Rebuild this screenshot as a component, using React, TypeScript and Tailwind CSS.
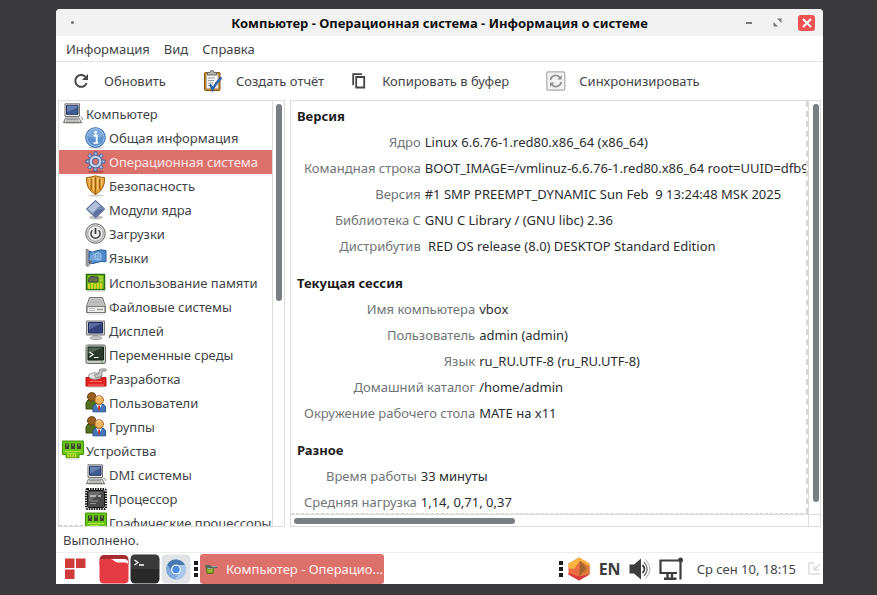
import type { ReactNode } from "react";

type IconProps = { children: ReactNode; size?: string; box?: string };

function Svg({ children, size = "size-[22px]", box = "0 0 22 22" }: IconProps) {
  return (
    <svg viewBox={box} className={`${size} shrink-0`} fill="none" aria-hidden="true">
      {children}
    </svg>
  );
}

const ComputerIcon = () => (
  <Svg>
    <ellipse cx="11" cy="19.800" rx="10.500" ry="1.500" fill="#d2d2cf" />
    <path d="M3 .8h14.500v12.700H3z" fill="#e8e8e4" stroke="#777" />
    <path d="M4.500 2.300h11.500v9H4.500z" fill="#3f5c92" stroke="#26375f" />
    <path d="M5 2.800h10.500v1.500L5 9.300z" fill="#7790bd" opacity=".7" />
    <path d="M3.500 15h13.500l2.500 4.500h-18z" fill="#e0e0dc" stroke="#777" />
    <path d="M4.500 16.500h11.500M3.800 18.100h13" stroke="#999" />
    <path d="M18.500 14q2.500.5 2 3" stroke="#999" />
  </Svg>
);

const InfoIcon = () => (
  <Svg>
    <ellipse cx="11" cy="20.600" rx="8" ry="1.200" fill="#d2d2d2" />
    <circle cx="10.500" cy="10.500" r="9.800" fill="#5b92cf" stroke="#2c67ae" />
    <circle cx="10.500" cy="10.500" r="8.700" stroke="#a3c4e8" />
    <path d="M2.500 9a8 8 0 0 1 16 0q-8 4-16 0z" fill="#a0c2e8" opacity=".5" />
    <circle cx="10.600" cy="5.500" r="1.400" fill="#fff" />
    <path d="M8.700 8.500h3v7M8.500 15.800h4.800" stroke="#fff" strokeWidth="1.800" />
  </Svg>
);

const teeth = [0, 45, 90, 135, 180, 225, 270, 315];

const GearIcon = () => (
  <Svg>
    <ellipse cx="11" cy="20.800" rx="8" ry="1" fill="#a74d49" />
    {teeth.map((angle) => (
      <path
        key={angle}
        d="M8.700 5 9.200.9h2.700l.5 4.100z"
        transform={`rotate(${angle} 10.500 10.500)`}
        fill="#a9b9df"
        stroke="#44598e"
        strokeWidth=".9"
      />
    ))}
    <circle cx="10.500" cy="10.500" r="6.500" fill="#9eb0da" stroke="#44598e" strokeWidth=".8" />
    <circle cx="10.500" cy="10.500" r="4.700" stroke="#d0daf0" strokeWidth="1.500" />
    <circle cx="10.500" cy="10.500" r="3" fill="#dc716c" stroke="#4c5f93" />
  </Svg>
);

const ShieldIcon = () => (
  <Svg>
    <ellipse cx="11" cy="20.500" rx="8" ry="1.200" fill="#d8d4cc" />
    <path d="M1.500 2.500Q6 2.500 10.500.8 15 2.500 19.500 2.500q1 11.500-9 17-10-5.500-9-17z" fill="#e9a03a" stroke="#99600b" />
    <path d="M3 4q4 0 7.500-1.600Q14 4 18 4" stroke="#ffd184" />
    <path d="M6.200 3.500v11M10.500 2v17M14.800 3.500v11" stroke="#9d610c" strokeWidth="1.300" />
    <path d="M4.700 5v6M8.500 4v11M12.700 4v11M16.700 5v6" stroke="#ffd07c" />
  </Svg>
);

const ModuleIcon = () => (
  <Svg>
    <ellipse cx="11" cy="18.500" rx="7" ry="2" fill="#c4c4c4" />
    <path d="m10.500 1.500 9.200 8.500-9 8.800L1.500 10z" fill="#7b8fba" stroke="#42537e" />
    <path d="m10.500 2.500-7.800 7.500 4.600 4L15 6.500z" fill="#b3c1dd" />
    <path d="m12 11-3.500 4 2.200 2.700L18.500 10z" fill="#5a6f9f" />
  </Svg>
);

const PowerIcon = () => (
  <Svg>
    <circle cx="10.500" cy="10.500" r="9.800" fill="#d8d8d6" stroke="#686868" />
    <circle cx="10.500" cy="10.500" r="7.800" fill="#eee" stroke="#999" />
    <path d="M7.400 7.200a4.600 4.600 0 1 0 6.200 0" stroke="#444" strokeWidth="1.500" />
    <path d="M10.500 5v6" stroke="#333" strokeWidth="1.700" />
  </Svg>
);

const FlagIcon = () => (
  <Svg>
    <path d="M1.200 2.500h2v17l-2-1z" fill="#aaa" stroke="#6e6e6e" strokeWidth=".8" />
    <path d="M4 4q3 2 7 0t10-.5v11.300q-5-1-9 .7t-8 .5z" fill="#4f8bcb" stroke="#2c5d98" />
    <path d="m4 13 4-9 3 5-4 7z" fill="#8ab3df" opacity=".6" />
    <circle cx="13" cy="9" r="3.200" stroke="#b8d5f2" />
    <path d="M10 9h6M13 6v6M9 12q4 3 8 0" stroke="#b8d5f2" strokeWidth=".7" />
    <path d="m4 13 3 1-2.500 5z" fill="#666" />
  </Svg>
);

const MemoryIcon = () => (
  <Svg>
    <path d="M1.500 2.500h18v15h-18z" fill="#7dc51a" stroke="#286b10" strokeWidth="1.500" />
    <path d="M4 6q2-2 4-1.500T13 5v5H3.500z" fill="#666e56" stroke="#414936" />
    <path d="M13.500 5h4M14 8h4" stroke="#c7dd4e" />
    <path d="M4 12v5M7 11v6M10 12v5M13 11v6M16 11v6" stroke="#f0d928" strokeWidth="1.500" />
    <path d="M2 19.500h18" stroke="#ddd" />
  </Svg>
);

const DriveIcon = () => (
  <Svg>
    <path d="M4.500 1.500h13l3 9v6h-19v-6z" fill="#d0d0cf" stroke="#777" />
    <path d="M5 2.500h12l2.500 8h-17z" fill="#bdbdbd" />
    <path d="M2 10.500h18v6H2z" fill="#eeeeec" stroke="#777" />
    <path d="M4 12.500h6M4 14.500h6" stroke="#bbb" />
    <path d="M12 13.500h6" stroke="#999" strokeWidth="1.500" />
    <path d="M2 18h18" stroke="#d7d7d7" />
  </Svg>
);

const DisplayIcon = () => (
  <Svg>
    <ellipse cx="11" cy="18" rx="6" ry="1.500" fill="#d7d7d7" stroke="#929292" />
    <path d="M8 15h5v3H8z" fill="#b9b9b9" />
    <path d="M1.500 1h18v14h-18z" fill="#cbd0cc" stroke="#777b78" />
    <path d="M3.500 2.500h14V13h-14z" fill="#34417c" stroke="#242d5b" />
    <path d="M4 3h13L4 9.500z" fill="#6979af" opacity=".7" />
  </Svg>
);

const TerminalIcon = () => (
  <Svg>
    <rect x="1" y="1" width="19.500" height="18.500" rx="1.500" fill="#c9ccc6" stroke="#676a64" />
    <path d="M3 3h15.500v13H3z" fill="#293a2c" stroke="#142016" />
    <path d="M3.500 3.500h14.500L3.500 10z" fill="#637365" opacity=".7" />
    <path d="m4.500 8 3.500 2.500-3.500 2.500M9 13.500h4.500" stroke="#fff" strokeWidth="1.200" />
    <path d="M16 18h2" stroke="#5aa724" />
  </Svg>
);

const DevIcon = () => (
  <Svg>
    <path d="M1 9.500h3.500l1 1.500h10l1-1.500H21V18H1z" fill="#e42424" stroke="#b40d10" />
    <path d="M5 13.500h12M3 17h16" stroke="#ff6a66" />
    <ellipse cx="10" cy="8" rx="6.500" ry="3.200" fill="#e4e4e4" stroke="#999" />
    <path d="M9 7 14 5.500V3.500Q14 1 16.500 1H21v2h-4v5l-6 2z" fill="#c5c8c5" stroke="#777" strokeWidth=".8" />
    <path d="M2 19.500h18" stroke="#ddd" />
  </Svg>
);

const UsersIcon = () => (
  <Svg>
    <path d="M1 17V11q1-4 6-4t6 4v6z" fill="#566f20" stroke="#384d0b" />
    <circle cx="6.700" cy="4.800" r="4.200" fill="#98601d" stroke="#684011" />
    <path d="M8 19.800v-5.300q1-3 6-3t6.500 3v5.300z" fill="#4478ba" stroke="#254f89" />
    <path d="M11 12.500h6l-3 5z" fill="#fff" />
    <path d="M13.300 13.500H15v4l-1 1-1-1z" fill="#cf2a24" />
    <circle cx="14.200" cy="8" r="4.300" fill="#f0b462" stroke="#ae6a1c" />
    <path d="M11.500 6.200q2-2 4-1" stroke="#ffdfab" strokeWidth="1.300" />
  </Svg>
);

const CardIcon = () => (
  <Svg>
    <path d="M.5 1h21v13.500H17v3H4v-3H.5z" fill="#6bc419" stroke="#419807" />
    <path d="M3 3.500h4V9H3zM9 3.500h4V9H9zM15 3.500h4V9h-4z" fill="#3b4b27" />
    <path d="M4 4.500h2v1H4zM10 4.500h2v1h-2zM16 4.500h2v1h-2z" fill="#94a97c" />
    <path d="M3 11.500h16M5 13.500h9" stroke="#b3e73e" />
    <path d="M6 14.500v3M8.500 14.500v3M11 14.500v3M13.500 14.500v3" stroke="#e8dc38" strokeWidth="1.300" />
    <path d="M4 19h13" stroke="#ccc" />
  </Svg>
);

const CpuIcon = () => (
  <Svg>
    <rect x="1" y="1" width="20" height="20" rx="1.500" stroke="#151515" strokeWidth="2" strokeDasharray="1.500 1" />
    <rect x="2.500" y="2.500" width="17" height="17" rx="1" fill="#4a4a4a" stroke="#191919" />
    <path d="M4 4h13L4 14z" fill="#858585" opacity=".6" />
    <path d="M5 8h6M13 8h3" stroke="#c9c9c9" strokeWidth="1.700" />
    <path d="M5 13h8M5 15.500h6" stroke="#929292" />
  </Svg>
);

const RefreshIcon = () => (
  <Svg size="size-5" box="0 0 20 20">
    <path d="M15.700 12A5.900 5.900 0 1 1 14.300 5.700" stroke="#454545" strokeWidth="2" />
    <path d="M17 3v6h-6z" fill="#454545" />
  </Svg>
);

const ReportIcon = () => (
  <Svg>
    <rect x="2.500" y="2.500" width="15.500" height="18" rx="1" fill="#c78a31" stroke="#85540e" />
    <path d="M4.500 4.500h11.500v14H4.500z" fill="#f4f4f2" stroke="#aaa" strokeWidth=".7" />
    <path d="M6 8h7M6 10.500h6M6 13h5M6 15.500h3" stroke="#9c9c9c" />
    <path d="M5.500 5V2.500H8q0-2 2-2t2 2h2.500V5z" fill="#b5b5b0" stroke="#696965" />
    <path d="M7.800 14.500Q9.500 16 10.500 19.500 14 12.500 19.500 7.500" stroke="#2d63ab" strokeWidth="2.400" />
  </Svg>
);

const CopyIcon = () => (
  <Svg size="size-5" box="0 0 20 20">
    <path d="M4.200 14V3.200H13" stroke="#444" strokeWidth="1.800" />
    <path d="M7.200 6h8v10.500h-8z" stroke="#444" strokeWidth="1.800" />
  </Svg>
);

const SyncIcon = () => (
  <Svg size="size-5" box="0 0 20 20">
    <rect x=".8" y=".8" width="18" height="18.400" rx="1.500" fill="#f3f3f3" stroke="#aaa" strokeWidth="1.200" />
    <path d="M4.500 9a5.300 5.300 0 0 1 9.500-2.500M15.200 11a5.300 5.300 0 0 1-9.500 2.500" stroke="#929292" strokeWidth="1.800" />
    <path d="M15.700 4v4.500h-4.500zM4 16v-4.500h4.500z" fill="#929292" />
  </Svg>
);

type Node = { label: string; icon: ReactNode; top?: boolean; selected?: boolean; tall?: boolean };

const tree: Node[] = [
  { label: "Компьютер", icon: <ComputerIcon />, top: true },
  { label: "Общая информация", icon: <InfoIcon /> },
  { label: "Операционная система", icon: <GearIcon />, selected: true },
  { label: "Безопасность", icon: <ShieldIcon /> },
  { label: "Модули ядра", icon: <ModuleIcon /> },
  { label: "Загрузки", icon: <PowerIcon /> },
  { label: "Языки", icon: <FlagIcon />, tall: true },
  { label: "Использование памяти", icon: <MemoryIcon /> },
  { label: "Файловые системы", icon: <DriveIcon /> },
  { label: "Дисплей", icon: <DisplayIcon /> },
  { label: "Переменные среды", icon: <TerminalIcon /> },
  { label: "Разработка", icon: <DevIcon /> },
  { label: "Пользователи", icon: <UsersIcon /> },
  { label: "Группы", icon: <UsersIcon /> },
  { label: "Устройства", icon: <CardIcon />, top: true },
  { label: "DMI системы", icon: <ComputerIcon /> },
  { label: "Процессор", icon: <CpuIcon /> },
  { label: "Графические процессоры", icon: <CardIcon /> },
];

const sections = [
  {
    title: "Версия",
    rows: [
      ["Ядро", "Linux 6.6.76-1.red80.x86_64 (x86_64)"],
      ["Командная строка", "BOOT_IMAGE=/vmlinuz-6.6.76-1.red80.x86_64 root=UUID=dfb95"],
      ["Версия", "#1 SMP PREEMPT_DYNAMIC Sun Feb  9 13:24:48 MSK 2025"],
      ["Библиотека C", "GNU C Library / (GNU libc) 2.36"],
      ["Дистрибутив", " RED OS release (8.0) DESKTOP Standard Edition"],
    ],
  },
  {
    title: "Текущая сессия",
    rows: [
      ["Имя компьютера", "vbox"],
      ["Пользователь", "admin (admin)"],
      ["Язык", "ru_RU.UTF-8 (ru_RU.UTF-8)"],
      ["Домашний каталог", "/home/admin"],
      ["Окружение рабочего стола", "MATE на x11"],
    ],
  },
  {
    title: "Разное",
    rows: [
      ["Время работы", "33 минуты"],
      ["Средняя нагрузка", "1,14, 0,71, 0,37"],
    ],
  },
];

function TitleBar() {
  return (
    <header className="grid h-[27px] shrink-0 grid-cols-[1fr_auto_1fr] items-center rounded-t-sm bg-[#f2f2f2] px-2">
      <span className="ml-[7px] size-[3px] rounded-full bg-[#777]" />
      <h1 className="font-bold text-[#111]">Компьютер - Операционная система - Информация о системе</h1>
      <div className="flex items-center justify-end gap-3">
        <button aria-label="Свернуть" className="flex size-[17px] items-center justify-center">
          <span className="h-[2px] w-[6px] bg-[#777]" />
        </button>
        <button aria-label="Развернуть" className="flex size-[17px] items-center justify-center">
          <Svg size="size-[9px]" box="0 0 9 9">
            <path d="M4 .5h4.500V5zM.5 4v4.500H5z" fill="#777" />
          </Svg>
        </button>
        <button aria-label="Закрыть" className="flex h-4 w-[17px] items-center justify-center rounded-[3px] bg-[#ed5353]">
          <Svg size="size-[10px]" box="0 0 10 10">
            <path d="m1 1 8 8M9 1 1 9" stroke="#fff" strokeWidth="2" />
          </Svg>
        </button>
      </div>
    </header>
  );
}

function ToolButton({ icon, label, spaced }: { icon: ReactNode; label: string; spaced?: boolean }) {
  return (
    <button className={`flex items-center gap-[13px] whitespace-nowrap ${spaced ? "ml-3" : ""}`}>
      <span className="flex w-5 justify-center">{icon}</span>
      {label}
    </button>
  );
}

function Sidebar() {
  return (
    <nav className="flex w-[227px] shrink-0 border border-[#dcdcdc]">
      <div className="relative min-w-0 flex-1 overflow-hidden">
        <ul className="pt-px">
          {tree.map((node) => (
            <li key={node.label} className={node.tall ? "pb-px" : ""}>
              <button
                className={`flex h-6 w-full items-center gap-[2px] whitespace-nowrap ${node.top ? "pl-[3px]" : "pl-[26px]"} ${
                  node.selected ? "bg-[#dc716c] text-[#fbe9e8]" : ""
                }`}
              >
                {node.icon}
                {node.label}
              </button>
            </li>
          ))}
        </ul>
        <div className="absolute bottom-0 left-0 w-6 border-b border-dashed border-[#c8c8c8]" />
      </div>
      <div className="w-3 border-l border-[#dcdcdc] pt-[3px] pl-[3px]">
        <div className="h-[197px] w-[6px] rounded-full bg-[#7b7f83]" />
      </div>
    </nav>
  );
}

function Details() {
  return (
    <main className="grid min-w-0 flex-1 grid-cols-[minmax(0,1fr)_12px] grid-rows-[minmax(0,1fr)_12px] border border-[#dcdcdc]">
      <div className="overflow-hidden border-r-2 border-b border-dashed border-[#d6d6d6] pt-[2px]">
        {sections.map((section) => (
          <section key={section.title} className="mb-[11px]">
            <h2 className="h-[26px] pl-[6px] leading-[26px] font-bold text-[#1c1c1c]">{section.title}</h2>
            <table className="border-collapse whitespace-pre">
              <tbody>
                {section.rows.map(([name, value]) => (
                  <tr key={name} className="h-[26px]">
                    <th scope="row" className="pr-1 pl-[13px] text-right font-normal text-[#6f7476]">
                      {name}
                    </th>
                    <td className="text-[#2a2d2f]">{value}</td>
                  </tr>
                ))}
              </tbody>
            </table>
          </section>
        ))}
      </div>
      <div className="border-l border-[#dcdcdc] pt-[3px] pb-3 pl-[4px]">
        <div className="h-full w-[6px] rounded-full bg-[#7b7f83]" />
      </div>
      <div className="border-t border-[#dcdcdc] pt-[3px] pl-[3px]">
        <div className="h-[6px] w-[43%] rounded-full bg-[#7b7f83]" />
      </div>
      <div className="border-t border-l border-[#dcdcdc]" />
    </main>
  );
}

function Dots() {
  return (
    <span className="flex flex-col gap-[2px]">
      <i className="size-1 bg-[#1d1d1d]" />
      <i className="size-1 bg-[#1d1d1d]" />
      <i className="size-1 bg-[#1d1d1d]" />
    </span>
  );
}

function Taskbar() {
  return (
    <footer className="flex h-8 shrink-0 items-center border-t border-[#ededed]">
      <button aria-label="Меню" className="ml-2">
        <Svg>
          <path d="M1 .5h9.500V10H1zM12 .5h9.500V10H12zM1 11.500h9.500V21H1z" fill="#cf3b3b" />
        </Svg>
      </button>
      <div className="ml-[13px] flex gap-px">
        <button aria-label="Файлы">
          <Svg size="size-[30px]" box="0 0 30 30">
            <path d="M.5 6q0-5 5-5h19q5 0 5 5v5H.5z" fill="#a82b31" />
            <path d="M1 8q0-3 4-3h20q4 0 4 3v4H1z" fill="#fff" />
            <path d="M.5 9q0-4 4-4h7q2 0 3.500 1.700T19 8.500h7q3.500 0 3.500 4V25q0 4.500-4.500 4.500H5Q.5 29.500.5 25z" fill="#e43b42" />
          </Svg>
        </button>
        <button aria-label="Терминал">
          <Svg size="size-[30px]" box="0 0 30 30">
            <rect x=".5" y=".5" width="29" height="29" rx="4.500" fill="#292929" />
            <path d="M1 15V5q0-4 4-4h20q4 0 4 4v10z" fill="#3a3a3a" />
            <path d="m4.500 6 3.500 2.500-3.500 2.500M9 11h5" stroke="#fff" strokeWidth="1.300" />
          </Svg>
        </button>
        <button aria-label="Браузер">
          <Svg size="size-[30px]" box="0 0 30 30">
            <rect x=".5" y=".5" width="29" height="29" rx="4.500" fill="#e1e3e6" />
            <circle cx="15" cy="15.500" r="10" fill="#7ea9da" />
            <path d="M6.300 10.500A10 10 0 0 1 24 11H15a4.700 4.700 0 0 0-4.400 6z" fill="#4a78b0" />
            <path d="M24 11a10 10 0 0 1-10 14.500l5-7.500a5 5 0 0 0-1-7z" fill="#a9c8ea" />
            <circle cx="15" cy="15.500" r="5" fill="#f3f7fc" />
            <circle cx="15" cy="15.500" r="3.700" fill="#4c8ce0" />
          </Svg>
        </button>
      </div>
      <span className="ml-[3px]">
        <Dots />
      </span>
      <button className="ml-[2px] flex h-[30px] w-[184px] items-center gap-2 rounded-[3px] bg-[#dc716c] pl-1 text-left text-[#fff1f0]">
        <Svg size="size-[14px]" box="0 0 14 14">
          <path d="M2 5h8l-1 6.500H3z" fill="#84a32a" stroke="#53681e" strokeWidth=".8" />
          <path d="M1 3h5l1 1.500h6V6H2z" fill="#58675f" />
          <path d="M8 4.500h5M4 6.500h4" stroke="#93a8b0" />
          <path d="M4 9h4" stroke="#c0d040" />
        </Svg>
        <span className="whitespace-nowrap">Компьютер - Операцио...</span>
      </button>
      <div className="ml-auto flex items-center">
        <Dots />
        <button aria-label="Обновления" className="ml-1">
          <Svg size="size-6" box="0 0 24 24">
            <path d="M12 .5 22.500 6.500v11L12 23.500 1.500 17.500v-11z" fill="#ee6d42" />
            <path d="M12 .5 22.500 6.500v3L13 4 7 12l-5.500-1V6.500z" fill="#f9b33f" />
            <path d="m13 4 9.500 5.500v8L12 20z" fill="#dc7a3a" />
            <path d="m1.500 16 10.500 3.500 10.500-2L12 23.500l-10.500-6z" fill="#dc3b43" />
            <path d="m13 3.500 6.500 8L12 19.500z" fill="#a4662f" />
          </Svg>
        </button>
        <button className="ml-2 text-base leading-5 font-bold text-[#3d3d3d]">EN</button>
        <button aria-label="Громкость" className="ml-2">
          <Svg>
            <path d="M.5 6.500H5l7-6v21l-7-6H.5z" fill="#3d3d3d" />
            <path d="M13.500 7q4 4 0 8" stroke="#3d3d3d" strokeWidth="1.800" />
            <path d="M15 4q6.500 7 0 14" stroke="#777" strokeWidth="1.300" />
            <path d="M16.500 1.500q9 9.500 0 19" stroke="#aaa" />
          </Svg>
        </button>
        <button aria-label="Сеть" className="ml-2">
          <Svg size="size-6" box="0 0 24 24">
            <path d="M19 3.500H1.500v12.500H18M21.500 3v19.500" stroke="#3d3d3d" strokeWidth="2.200" />
            <circle cx="21.500" cy="3" r="2.500" fill="#3d3d3d" />
            <path d="M8.500 16v5M13 16v5M5 21.700h12.500" stroke="#3d3d3d" strokeWidth="2.400" />
          </Svg>
        </button>
        <time className="ml-[14px] whitespace-nowrap">Ср сен 10, 18:15</time>
        <button aria-label="Показать рабочий стол" className="mr-[2px] ml-3">
          <Svg size="size-[13px]" box="0 0 13 13">
            <path d="M6 1H1v11h11M12 2 6 8M6 3.500V8h5" stroke="#ddd" strokeWidth="1.500" />
          </Svg>
        </button>
      </div>
    </footer>
  );
}

export default function App() {
  return (
    <div className="flex h-screen flex-col bg-[#3a3a3c] pt-[9px] pr-[54px] pb-[11px] pl-14 font-['Noto_Sans',sans-serif] text-[13px] leading-[18px] text-[#3f4447]">
      <div className="flex min-h-0 flex-1 flex-col overflow-hidden rounded-t-sm bg-white">
        <TitleBar />
        <nav className="flex h-[26px] shrink-0 items-center gap-[14px] border-b border-[#e2e2e2] px-[10px]">
          <button>Информация</button>
          <button>Вид</button>
          <button>Справка</button>
        </nav>
        <div className="flex h-[38px] shrink-0 items-center gap-[25px] pl-[15px]">
          <ToolButton icon={<RefreshIcon />} label="Обновить" />
          <ToolButton icon={<ReportIcon />} label="Создать отчёт" spaced />
          <ToolButton icon={<CopyIcon />} label="Копировать в буфер" />
          <ToolButton icon={<SyncIcon />} label="Синхронизировать" spaced />
        </div>
        <div className="flex min-h-0 flex-1 gap-[5px] px-[2px]">
          <Sidebar />
          <Details />
        </div>
        <div className="h-[25px] shrink-0 pl-[7px] leading-[26px]">Выполнено.</div>
        <Taskbar />
      </div>
    </div>
  );
}
